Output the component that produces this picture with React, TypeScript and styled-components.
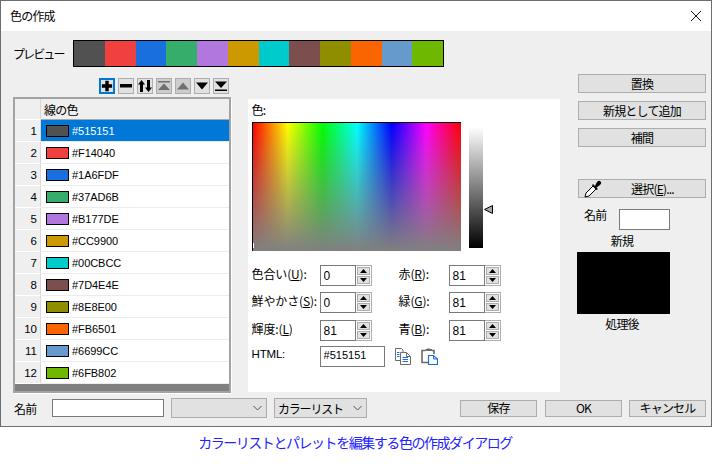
import React from "react";
import styled, { createGlobalStyle } from "styled-components";

const colors = [
  "#515151",
  "#F14040",
  "#1A6FDF",
  "#37AD6B",
  "#B177DE",
  "#CC9900",
  "#00CBCC",
  "#7D4E4E",
  "#8E8E00",
  "#FB6501",
  "#6699CC",
  "#6FB802",
];

const GlobalStyle = createGlobalStyle`
  html, body {
    margin: 0;
    padding: 0;
    background: #fff;
  }
  body {
    width: 712px;
    height: 464px;
    overflow: hidden;
    font-family: "Noto Sans CJK JP", "Liberation Sans", sans-serif;
    font-size: 12px;
    letter-spacing: -0.8px;
    color: #000;
  }
  * {
    box-sizing: border-box;
  }
`;

const Dialog = styled.div`
  width: 712px;
  height: 427px;
  border: 1px solid #6d6d6d;
  border-bottom-color: #707070;
  display: flex;
  flex-direction: column;
  background: #efefef;
`;

const TitleBar = styled.div`
  height: 30px;
  flex: none;
  background: #fff;
  display: flex;
  align-items: center;
  justify-content: space-between;
  padding: 0 10px 0 9px;
  line-height: 1;
`;

const Body = styled.div`
  flex: 1;
  display: flex;
  flex-direction: column;
  padding: 9px 5px 0 12px;
`;

const PreviewRow = styled.div`
  display: flex;
  align-items: center;
  height: 27px;
`;

const PreviewLabel = styled.div`
  width: 60px;
  letter-spacing: -1.9px;
`;

const Strip = styled.div`
  display: flex;
  width: 371px;
  height: 27px;
  border: 1px solid #000;
`;

const StripCell = styled.div<{ $color: string }>`
  flex: 1;
  background: ${(p) => p.$color};
`;

const Main = styled.div`
  display: flex;
  margin-top: 7px;
  height: 318px;
`;

const LeftColumn = styled.div`
  width: 219px;
  padding-top: 4px;
`;

const Toolbar = styled.div`
  display: flex;
  gap: 3px;
  margin-left: 86px;
  margin-bottom: 3px;
`;

const ToolButton = styled.button<{ $focus?: boolean; $off?: boolean }>`
  width: 16px;
  height: 16px;
  padding: 0;
  display: flex;
  align-items: center;
  justify-content: center;
  background: ${(p) => (p.$off ? "#cdcdcd" : "#e1e1e1")};
  border: ${(p) => (p.$focus ? "2px solid #0078d7" : "1px solid #adadad")};
  color: ${(p) => (p.$off ? "#6f6f6f" : "#000")};
`;

const Table = styled.div`
  width: 218px;
  border: 2px solid #a3a3a3;
  box-shadow: 1px 1px 0 #fff;
  background: #808080;
  padding-bottom: 7px;
`;

const Row = styled.div<{ $head?: boolean; $selected?: boolean }>`
  display: grid;
  grid-template-columns: 26px 1fr;
  height: ${(p) => (p.$head ? "21px" : "22px")};
  background: ${(p) => (p.$head ? "#efefef" : p.$selected ? "#0078d7" : "#fff")};
  color: ${(p) => (p.$selected ? "#fff" : "#000")};
  border-bottom: 1px solid ${(p) => (p.$head ? "#a8a8a8" : "#ececec")};
`;

const RowNumber = styled.div`
  background: #efefef;
  color: #000;
  border-right: 1px solid #d8d8d8;
  border-bottom: 1px solid #fff;
  margin-bottom: -1px;
  display: flex;
  align-items: center;
  justify-content: flex-end;
  padding-right: 3px;
  font-family: "Liberation Sans", sans-serif;
  font-size: 11.5px;
  letter-spacing: 0;
`;

const HeadText = styled.div`
  display: flex;
  align-items: center;
  padding-left: 3px;
`;

const ColorCell = styled.div`
  display: flex;
  align-items: center;
  padding-left: 5px;
  gap: 3px;
  font-family: "Liberation Sans", sans-serif;
  font-size: 11px;
  letter-spacing: -0.05px;
`;

const Swatch = styled.div<{ $color: string }>`
  width: 23px;
  height: 12px;
  border: 1px solid #000;
  background: ${(p) => p.$color};
`;

const ColorPanel = styled.div`
  width: 313px;
  height: 293px;
  margin: 25px 17px 0 16px;
  background: #fff;
  padding: 4px;
`;

const PanelLabel = styled.div`
  height: 19px;
  line-height: 14px;
`;

const PickerRow = styled.div`
  display: flex;
  height: 129px;
  margin-bottom: 14px;
  position: relative;
`;

const Gradient = styled.div`
  width: 209px;
  height: 129px;
  border-left: 1px solid #000;
  border-top: 1px solid #000;
  background: linear-gradient(to bottom, rgba(128, 128, 128, 0), #808080),
    linear-gradient(
      to right,
      #f00 0%,
      #ff0 16.67%,
      #0f0 33.33%,
      #0ff 50%,
      #00f 66.67%,
      #f0f 83.33%,
      #f00 100%
    );
  position: relative;
`;

const Cursor = styled.div`
  position: absolute;
  left: 0;
  bottom: 3px;
  width: 1px;
  height: 5px;
  background: #fff;
`;

const LumBar = styled.div`
  width: 14px;
  height: 121px;
  margin: 5px 0 0 8px;
  background: linear-gradient(to bottom, #fff, #000);
`;

const LumArrow = styled.svg`
  position: absolute;
  left: 232px;
  top: 83px;
`;

const FieldGrid = styled.div`
  display: grid;
  grid-template-columns: 68px 52px 27px 50px 52px;
  grid-template-rows: 27px 28px 26px 21px;
  align-items: start;
`;

const FieldLabel = styled.div`
  height: 21px;
  line-height: 17px;
  white-space: nowrap;
  letter-spacing: -0.15px;
`;

const HtmlLabel = styled(FieldLabel)`
  font-family: "Liberation Sans", sans-serif;
  font-size: 11.5px;
  letter-spacing: -0.2px;
`;

const Spin = styled.div`
  display: flex;
  width: 52px;
  height: 21px;
`;

const SpinInput = styled.input`
  width: 36px;
  height: 21px;
  border: 1px solid #7a7a7a;
  background: #fff;
  padding: 0 3px;
  font-family: "Liberation Sans", sans-serif;
  font-size: 12px;
  outline: none;
`;

const SpinButtons = styled.div`
  width: 16px;
  display: flex;
  flex-direction: column;
  border: 1px solid #adadad;
  border-left: none;
  gap: 1px;
  background: #fff;
  padding: 1px;
`;

const SpinButton = styled.div`
  flex: 1;
  background: #e1e1e1;
  border: 1px solid #adadad;
  display: flex;
  align-items: center;
  justify-content: center;
`;

const HtmlCell = styled.div`
  grid-column: 2 / -1;
  display: flex;
  align-items: center;
  gap: 10px;
`;

const HtmlInput = styled.input`
  width: 65px;
  height: 21px;
  border: 1px solid #7a7a7a;
  background: #fff;
  padding: 0 3px 3px;
  font-family: "Liberation Sans", sans-serif;
  font-size: 11px;
  letter-spacing: 0;
  outline: none;
`;

const Side = styled.div`
  width: 129px;
  display: flex;
  flex-direction: column;
  align-items: flex-start;
`;

const Button = styled.button`
  height: 19px;
  padding: 0;
  background: #e1e1e1;
  border: 1px solid #adadad;
  font: inherit;
  letter-spacing: inherit;
  line-height: 1;
  color: #000;
  display: flex;
  align-items: center;
  justify-content: center;
`;

const SideButton = styled(Button)`
  width: 128px;
  margin: 0 0 8px 1px;
  flex: none;
`;

const PickButton = styled(SideButton)`
  margin-top: 24px;
  position: relative;
  padding-left: 21px;
  height: 19px;
`;

const Dropper = styled.svg`
  position: absolute;
  left: 5px;
  top: 0;
`;

const NameRow = styled.div`
  display: flex;
  margin: 3px 0 0 7px;
`;

const NameCaption = styled.div`
  width: 35px;
  line-height: 16px;
  margin-top: -2px;
`;

const NameBox = styled.div`
  width: 51px;
  height: 21px;
  background: #fff;
  border: 1px solid #7a7a7a;
`;

const SideCaption = styled.div`
  width: 90px;
  height: 21px;
  line-height: 21px;
  text-align: center;
`;

const ResultCaption = styled(SideCaption)`
  margin-top: -1px;
`;

const ResultBox = styled.div`
  width: 93px;
  height: 62px;
  margin-top: 1px;
  background: #000;
`;

const Footer = styled.div`
  display: flex;
  align-items: center;
  margin-top: 6px;
  height: 20px;
`;

const FooterLabel = styled.div`
  width: 39px;
  padding-left: 1px;
`;

const NameInput = styled.input`
  width: 112px;
  height: 18px;
  border: 1px solid #7a7a7a;
  background: #fff;
  outline: none;
`;

const Combo = styled.div<{ $width: number }>`
  width: ${(p) => p.$width}px;
  height: 20px;
  margin-left: 7px;
  background: #e1e1e1;
  border: 1px solid #adadad;
  display: flex;
  align-items: center;
  justify-content: space-between;
  padding: 0 4px 0 3px;
  letter-spacing: -1.2px;
`;

const FooterButtons = styled.div`
  margin-left: auto;
  display: flex;
  gap: 8px;
`;

const FooterButton = styled(Button)`
  width: 77px;
  height: 17px;
  &:last-child {
    margin-left: -1px;
  }
`;

const Caption = styled.div`
  margin-top: 6px;
  margin-left: -2px;
  text-align: center;
  color: #2222ff;
  font-size: 14px;
  letter-spacing: -1.45px;
  line-height: 18px;
`;

const Chevron = () => (
  <svg width="9" height="6" viewBox="0 0 9 6">
    <path d="M0.5 1 L4.5 5 L8.5 1" fill="none" stroke="#555" strokeWidth="1" />
  </svg>
);

const Spinner = ({ value }: { value: string }) => (
  <Spin>
    <SpinInput defaultValue={value} readOnly />
    <SpinButtons>
      <SpinButton>
        <svg width="7" height="4" viewBox="0 0 7 4">
          <path d="M3.5 0 L7 4 H0 Z" fill="#000" />
        </svg>
      </SpinButton>
      <SpinButton>
        <svg width="7" height="4" viewBox="0 0 7 4">
          <path d="M0 0 H7 L3.5 4 Z" fill="#000" />
        </svg>
      </SpinButton>
    </SpinButtons>
  </Spin>
);

const ToolIcon = ({ d }: { d: string }) => (
  <svg width="14" height="14" viewBox="0 0 14 14">
    <path d={d} fill="currentColor" />
  </svg>
);

const CopyIcon = () => (
  <svg width="16" height="17" viewBox="0 0 16 17">
    <path d="M0.5 0.5 H6.5 L8 2 V12.5 H0.5 Z" fill="#fff" stroke="#6a6a6a" />
    <path d="M5.5 4.5 H11.5 L15.5 8.5 V16.5 H5.5 Z" fill="#fff" stroke="#6a6a6a" />
    <path d="M11.5 4.5 V8.5 H15.5" fill="none" stroke="#6a6a6a" />
    <path d="M2 4.5 H4.5 M2 6.5 H4.5 M2 8.5 H4.5 M7.5 9.5 H13 M7.5 11.5 H13 M7.5 13.5 H13" stroke="#1a6fdf" />
  </svg>
);

const PasteIcon = () => (
  <svg width="17" height="17" viewBox="0 0 17 17">
    <path d="M4.5 2.5 H1 V14.5 H7 M11 2.5 H13 V6" fill="none" stroke="#6a6a6a" strokeWidth="1.6" />
    <path d="M4.5 3 V1 H6 V0.5 H9 V1 H11 V3 Z" fill="#6a6a6a" />
    <path d="M7.5 7.5 H12.5 L16.5 11 V16.5 H7.5 Z" fill="#fff" stroke="#1a6fdf" strokeWidth="1.2" />
    <path d="M12.5 7.5 V11 H16.5" fill="none" stroke="#1a6fdf" />
  </svg>
);

export default function App() {
  return (
    <>
      <GlobalStyle />
      <Dialog>
        <TitleBar>
          <span>色の作成</span>
          <svg width="10" height="10" viewBox="0 0 10 10">
            <path d="M0 0 L10 10 M10 0 L0 10" stroke="#111" strokeWidth="1" />
          </svg>
        </TitleBar>
        <Body>
          <PreviewRow>
            <PreviewLabel>プレビュー</PreviewLabel>
            <Strip>
              {colors.map((c) => (
                <StripCell key={c} $color={c} />
              ))}
            </Strip>
          </PreviewRow>
          <Main>
            <LeftColumn>
              <Toolbar>
                <ToolButton $focus>
                  <ToolIcon d="M5 1 H9 V5 H13 V9 H9 V13 H5 V9 H1 V5 H5 Z" />
                </ToolButton>
                <ToolButton>
                  <ToolIcon d="M1 5 H13 V8.5 H1 Z" />
                </ToolButton>
                <ToolButton>
                  <ToolIcon d="M3.5 1 L7 5.5 H5 V13 H2 V5.5 H0 Z M10.5 13 L14 8.5 H12 V1 H9 V8.5 H7 Z" />
                </ToolButton>
                <ToolButton $off>
                  <ToolIcon d="M1 2 H13 V3.5 H1 Z M7 4.5 L13 11 H1 Z" />
                </ToolButton>
                <ToolButton $off>
                  <ToolIcon d="M7 3.5 L13 10.5 H1 Z" />
                </ToolButton>
                <ToolButton>
                  <ToolIcon d="M1 3.5 H13 L7 10.5 Z" />
                </ToolButton>
                <ToolButton>
                  <ToolIcon d="M1 2.5 H13 L7 9 Z M1 10.5 H13 V12 H1 Z" />
                </ToolButton>
              </Toolbar>
              <Table>
                <Row $head>
                  <RowNumber />
                  <HeadText>線の色</HeadText>
                </Row>
                {colors.map((c, i) => (
                  <Row key={c} $selected={i === 0}>
                    <RowNumber>{i + 1}</RowNumber>
                    <ColorCell>
                      <Swatch $color={c} />
                      {c}
                    </ColorCell>
                  </Row>
                ))}
              </Table>
            </LeftColumn>

            <ColorPanel>
              <PanelLabel>色:</PanelLabel>
              <PickerRow>
                <Gradient>
                  <Cursor />
                </Gradient>
                <LumBar />
                <LumArrow width="10" height="9" viewBox="0 0 10 9">
                  <path d="M0.5 4.5 L8.5 0.5 V8.5 Z" fill="#a8a8a8" stroke="#000" />
                </LumArrow>
              </PickerRow>
              <FieldGrid>
                <FieldLabel>
                  色合い(<u>U</u>):
                </FieldLabel>
                <Spinner value="0" />
                <span />
                <FieldLabel>
                  赤(<u>R</u>):
                </FieldLabel>
                <Spinner value="81" />

                <FieldLabel>
                  鮮やかさ(<u>S</u>):
                </FieldLabel>
                <Spinner value="0" />
                <span />
                <FieldLabel>
                  緑(<u>G</u>):
                </FieldLabel>
                <Spinner value="81" />

                <FieldLabel>
                  輝度:(<u>L</u>)
                </FieldLabel>
                <Spinner value="81" />
                <span />
                <FieldLabel>
                  青(<u>B</u>):
                </FieldLabel>
                <Spinner value="81" />

                <HtmlLabel>HTML:</HtmlLabel>
                <HtmlCell>
                  <HtmlInput defaultValue="#515151" readOnly />
                  <CopyIcon />
                  <PasteIcon />
                </HtmlCell>
              </FieldGrid>
            </ColorPanel>

            <Side>
              <SideButton>置換</SideButton>
              <SideButton>新規として追加</SideButton>
              <SideButton>補間</SideButton>
              <PickButton>
                <Dropper width="18" height="19" viewBox="0 0 18 19">
                  <path d="M10 5 L2 13 L1 17 L5 16 L13 8" fill="#fff" stroke="#000" />
                  <path d="M9 4 L11 6 L13 2 Q15 0 16.5 1.5 Q18 3 16 5 L12.5 7.5 L14 9 L12.5 10 L8 5.5 Z" fill="#000" />
                </Dropper>
                選択(<u>E</u>)...
              </PickButton>
              <NameRow>
                <NameCaption>名前</NameCaption>
                <NameBox />
              </NameRow>
              <SideCaption>新規</SideCaption>
              <ResultBox />
              <ResultCaption>処理後</ResultCaption>
            </Side>
          </Main>
          <Footer>
            <FooterLabel>名前</FooterLabel>
            <NameInput readOnly />
            <Combo $width={96}>
              <span />
              <Chevron />
            </Combo>
            <Combo $width={93}>
              カラーリスト
              <Chevron />
            </Combo>
            <FooterButtons>
              <FooterButton>保存</FooterButton>
              <FooterButton>OK</FooterButton>
              <FooterButton>キャンセル</FooterButton>
            </FooterButtons>
          </Footer>
        </Body>
      </Dialog>
      <Caption>カラーリストとパレットを編集する色の作成ダイアログ</Caption>
    </>
  );
}
